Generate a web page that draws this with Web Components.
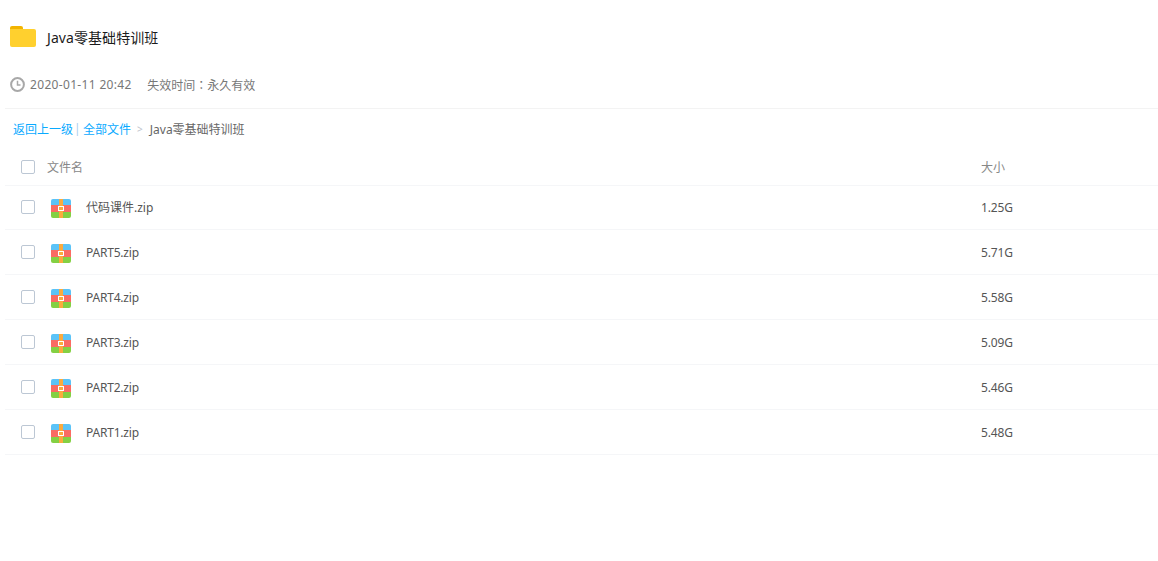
<!DOCTYPE html>
<html lang="zh">
<head>
<meta charset="utf-8">
<title>Java零基础特训班</title>
<style>
html, body { margin: 0; background: #fff; }
body { font: 12px "Noto Sans", "Noto Sans CJK SC", sans-serif; color: #666; }
</style>
</head>
<body>
<share-page>
  <share-header title="Java零基础特训班"></share-header>
  <share-meta time="2020-01-11 20:42" expire="失效时间" forever="永久有效"></share-meta>
  <crumb-bar current="Java零基础特训班"></crumb-bar>
  <file-head></file-head>
  <file-row name="代码课件.zip" size="1.25G"></file-row>
  <file-row name="PART5.zip" size="5.71G"></file-row>
  <file-row name="PART4.zip" size="5.58G"></file-row>
  <file-row name="PART3.zip" size="5.09G"></file-row>
  <file-row name="PART2.zip" size="5.46G"></file-row>
  <file-row name="PART1.zip" size="5.48G"></file-row>
</share-page>

<script>
const zipIcon = `
<svg width="20" height="19" viewBox="0 0 20 19">
  <path d="M2 0h16a2 2 0 0 1 2 2v4H0V2a2 2 0 0 1 2-2z" fill="#5cc3f7"/>
  <rect y="6" width="20" height="7" fill="#fa6b63"/>
  <path d="M0 13h20v4a2 2 0 0 1-2 2H2a2 2 0 0 1-2-2z" fill="#84d043"/>
  <rect x="8" width="4" height="19" fill="#fbaa3e"/>
  <rect x="7" y="7" width="6" height="5" fill="#fff"/>
  <rect x="8" y="8" width="4" height="3" fill="#fbaa3e"/>
</svg>`;

const folderIcon = `
<svg width="26" height="21" viewBox="0 0 26 21">
  <path d="M2 0h9a2 2 0 0 1 2 2v2H0V2a2 2 0 0 1 2-2z" fill="#f2b400"/>
  <path d="M2 3h22a2 2 0 0 1 2 2v14a2 2 0 0 1-2 2H2a2 2 0 0 1-2-2V3z" fill="#ffd02e"/>
</svg>`;

const clockIcon = `
<svg width="15" height="15" viewBox="0 0 15 15" fill="none" stroke="#a8a8a8">
  <circle cx="7.5" cy="7.5" r="6.4" stroke-width="2"/>
  <path d="M7.5 3.8v4.2h3" stroke-width="1.5"/>
</svg>`;

class ShareHeader extends HTMLElement {
  connectedCallback() {
    this.attachShadow({ mode: 'open' }).innerHTML = `
      <style>
        :host { display: flex; align-items: center; height: 75px; padding: 0 0 2px 10px; box-sizing: border-box; }
        .title { margin-left: 11px; font-size: 14px; color: #1c1c1c; letter-spacing: .08px; }
        svg { display: block; }
      </style>
      ${folderIcon}
      <span class="title">${this.getAttribute('title')}</span>`;
  }
}

class ShareMeta extends HTMLElement {
  connectedCallback() {
    this.attachShadow({ mode: 'open' }).innerHTML = `
      <style>
        :host { display: flex; align-items: center; height: 19px; margin-left: 5px; padding: 0 0 14px 5px; border-bottom: 1px solid #f3f3f3; }
        span { color: #777; }
        .time { margin-left: 5px; letter-spacing: .33px; }
        .expire { margin-left: 15.5px; }
        .colon { font-family: "Noto Sans CJK TC", sans-serif; }
      </style>
      ${clockIcon}
      <span class="time">${this.getAttribute('time')}</span>
      <span class="expire">${this.getAttribute('expire')}<span class="colon" lang="zh-TW">：</span>${this.getAttribute('forever')}</span>`;
  }
}

class CrumbBar extends HTMLElement {
  connectedCallback() {
    this.attachShadow({ mode: 'open' }).innerHTML = `
      <style>
        :host { display: flex; align-items: center; height: 41px; padding: 0 0 2px 13px; box-sizing: border-box; }
        a { color: #09aaff; text-decoration: none; }
        .bar { color: #a9cdec; margin: 0 2.4px 0 1px; }
        .sep { color: #c0c4cc; margin: 0 7px 0 6px; font-size: 10px; }
      </style>
      <a href="#">返回上一级</a><span class="bar">|</span><a href="#">全部文件</a>
      <span class="sep">&gt;</span>
      <span>${this.getAttribute('current')}</span>`;
  }
}

// shared by the head and the rows so the columns stay lined up
const rowStyle = `
  :host { display: flex; align-items: center; margin-left: 5px; border-bottom: 1px solid #f5f6f8; box-sizing: border-box; }
  .check { width: 12px; height: 12px; border: 1px solid #bcc7d4; border-radius: 2px; margin-left: 16px; flex: none; }
  .size { margin-left: auto; width: 177px; flex: none; }
  .name { flex: none; }
`;

class FileHead extends HTMLElement {
  connectedCallback() {
    this.attachShadow({ mode: 'open' }).innerHTML = `
      <style>
        ${rowStyle}
        :host { height: 36px; padding-bottom: 1px; margin-bottom: -1px; color: #888; }
        .name { margin-left: 12px; }
      </style>
      <div class="check"></div>
      <span class="name">文件名</span>
      <span class="size">大小</span>`;
  }
}

class FileRow extends HTMLElement {
  connectedCallback() {
    const name = this.getAttribute('name');
    // latin-only names come out a touch narrower in the original
    const tight = /^[\x00-\x7f]+$/.test(name) ? 'tight' : '';
    this.attachShadow({ mode: 'open' }).innerHTML = `
      <style>
        ${rowStyle}
        :host { height: 45px; color: #555; }
        svg { display: block; margin: 3px 0 0 16px; flex: none; }
        .name { margin-left: 15px; }
        .tight { letter-spacing: -.2px; }
        .size { letter-spacing: -.15px; }
      </style>
      <div class="check"></div>
      ${zipIcon}
      <span class="name ${tight}">${name}</span>
      <span class="size">${this.getAttribute('size')}</span>`;
  }
}

class SharePage extends HTMLElement {
  connectedCallback() {
    this.attachShadow({ mode: 'open' }).innerHTML = `
      <style>:host { display: block; }</style>
      <slot></slot>`;
  }
}

customElements.define('share-header', ShareHeader);
customElements.define('share-meta', ShareMeta);
customElements.define('crumb-bar', CrumbBar);
customElements.define('file-head', FileHead);
customElements.define('file-row', FileRow);
customElements.define('share-page', SharePage);
</script>
</body>
</html>
